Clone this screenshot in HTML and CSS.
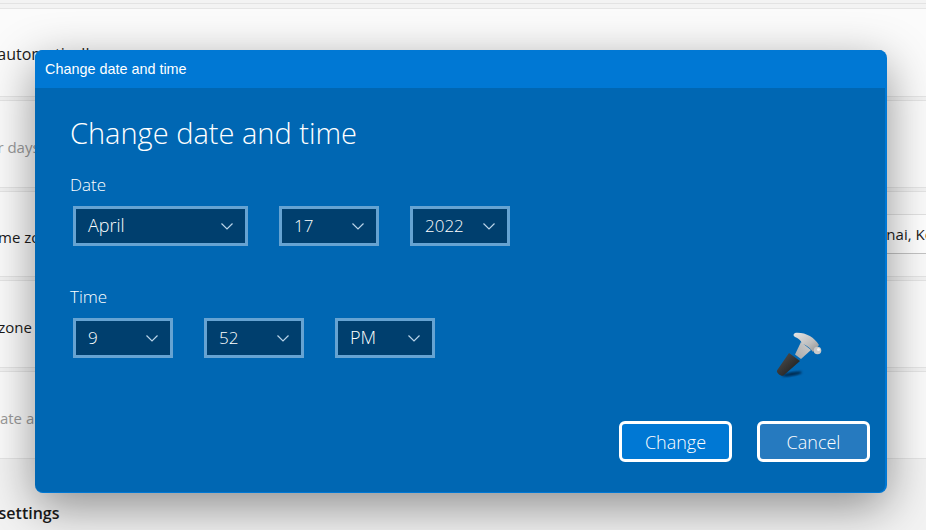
FILE: index.html
```
<!DOCTYPE html>
<html lang="en">
<head>
<meta charset="utf-8">
<title>Change date and time</title>
<link rel="stylesheet" href="styles.css">
</head>
<body>
<main class="settings">
  <div class="sliver"></div>
  <section class="row r1"><span class="label first shift1">Set time automatically</span></section>
  <section class="row r2"><span class="label muted shift2">Show calendar days</span></section>
  <section class="row r3"><span class="label shift3">Time zone</span><span class="tz">(UTC+05:30) Chennai, Kolkata, Mumbai</span></section>
  <section class="row r4"><span class="label shift4">Set time zone</span></section>
  <section class="row r5"><span class="label muted shift5">Date and time</span></section>
  <h2 class="heading">Additional settings</h2>
</main>

<div class="dialog">
  <header class="titlebar">Change date and time</header>
  <div class="body">
    <h1 class="title">Change date and time</h1>
    <div class="label-date">Date</div>
    <div class="selects">
      <div class="select wide"><span>April</span><svg class="chev" viewBox="0 0 12 7"><path d="M.5.5 6 6l5.500-5.500"/></svg></div>
      <div class="select num"><span>17</span><svg class="chev" viewBox="0 0 12 7"><path d="M.5.5 6 6l5.500-5.500"/></svg></div>
      <div class="select num"><span>2022</span><svg class="chev" viewBox="0 0 12 7"><path d="M.5.5 6 6l5.500-5.500"/></svg></div>
    </div>
    <div class="label-time">Time</div>
    <div class="selects">
      <div class="select num"><span>9</span><svg class="chev" viewBox="0 0 12 7"><path d="M.5.5 6 6l5.500-5.500"/></svg></div>
      <div class="select num"><span>52</span><svg class="chev" viewBox="0 0 12 7"><path d="M.5.5 6 6l5.500-5.500"/></svg></div>
      <div class="select"><span>PM</span><svg class="chev" viewBox="0 0 12 7"><path d="M.5.5 6 6l5.500-5.500"/></svg></div>
    </div>
    <div class="actions">
      <button class="btn primary" type="button">Change</button>
      <button class="btn secondary" type="button">Cancel</button>
    </div>
    <svg class="hammer" viewBox="0 0 50 50" width="50" height="50" aria-hidden="true">
      <defs>
        <linearGradient id="steel" x1="0" y1="0" x2="1" y2="1">
          <stop offset="0" stop-color="#e6e6e6"/>
          <stop offset=".6" stop-color="#bdbdbd"/>
          <stop offset="1" stop-color="#8f8f8f"/>
        </linearGradient>
        <linearGradient id="neck" x1="0" y1="1" x2="1" y2="0">
          <stop offset="0" stop-color="#a8a8a8"/>
          <stop offset="1" stop-color="#cfcfcf"/>
        </linearGradient>
        <linearGradient id="grip" x1="0" y1="0" x2="1" y2="1">
          <stop offset="0" stop-color="#555"/>
          <stop offset="1" stop-color="#151515"/>
        </linearGradient>
        <filter id="soft"><feGaussianBlur stdDeviation="1"/></filter>
      </defs>
      <ellipse cx="17" cy="44" rx="10" ry="1.800" fill="#00264a" transform="rotate(-10 17 44)" filter="url(#soft)"/>
      <path d="M14 23 25 31 8.500 45.500C6.500 47 1 43 2 40.500z" fill="url(#grip)"/>
      <path d="M26 12 36 20 26 29 20 24.500z" fill="url(#neck)"/>
      <path d="M20 3C30 2 39 7 44 15L38 22C35 18 32 15 27 14 26 10 23 8 20 7 18 6 18 4 20 3z" fill="url(#steel)"/>
      <circle cx="42.500" cy="20.500" r="3.800" fill="#c9c9c9"/>
      <circle cx="43.500" cy="19.500" r="1.500" fill="#efefef"/>
    </svg>
  </div>
</div>
</body>
</html>
```
FILE: styles.css
```
* { box-sizing: border-box; }

html {
  background: #f3f3f3;
}

html, body {
  margin: 0;
  height: 530px;
  overflow: hidden;
}

body {
  position: relative;
  background: #f3f3f3;
  font-family: "Open Sans", "Noto Sans", sans-serif;
}

.settings {
  display: flex;
  flex-direction: column;
  height: 530px;
  padding-top: 3px;
  overflow: hidden;
}

.sliver {
  height: 1px;
  margin-bottom: 4px;
  background: #e3e3e3;
}

.row {
  display: flex;
  align-items: center;
  justify-content: space-between;
  flex: none;
  background: #fbfbfb;
  border-top: 1px solid #e5e5e5;
  border-bottom: 1px solid #e5e5e5;
  margin-bottom: 3px;
  white-space: nowrap;
  font-size: 15px;
  color: #1a1a1a;
}

.r1 { height: 89px; }
.r2 { height: 88px; }
.r3 { height: 86px; }
.r4 { height: 88px; }
.r5 { height: 88px; }

.label {
  display: block;
  padding-top: 5px;
}

.first {
  padding-top: 2px;
  font-size: 16px;
}

.muted { color: #9a9a9a; }
.shift1 { margin-left: -68px; }
.shift2 { margin-left: -99px; }
.shift3 { margin-left: -14px; }
.shift4 { margin-left: -63px; }
.shift5 { margin-left: -11px; }

.tz {
  display: block;
  flex: none;
  height: 40px;
  line-height: 38px;
  padding: 0 12px;
  margin-right: -120px;
  background: #fff;
  border: 1px solid #e2e2e2;
  border-bottom-color: #c4c4c4;
  border-radius: 4px;
}

.heading {
  margin: 40px 0 0 -85px;
  font-size: 16px;
  font-weight: 600;
  color: #1a1a1a;
  white-space: nowrap;
}

.dialog {
  position: absolute;
  left: 35px;
  top: 50px;
  width: 852px;
  height: 443px;
  display: flex;
  flex-direction: column;
  overflow: hidden;
  background: #0067b3;
  border-radius: 8px;
  border: solid #0078d4;
  border-width: 0 2px 1px 0;
  color: #fff;
  box-shadow: 0 14px 48px rgba(0, 0, 0, .42);
}

.titlebar {
  flex: none;
  height: 38px;
  margin-right: -2px;
  padding-left: 10px;
  background: #0078d4;
  font-family: "Liberation Sans", Arial, sans-serif;
  font-size: 14.400px;
  line-height: 38px;
}

.body {
  position: relative;
  flex: 1;
  padding-left: 35px;
}

.title {
  margin: 24px 0 0;
  height: 42px;
  font-size: 29px;
  font-weight: 300;
  line-height: 42px;
}

.label-date, .label-time {
  font-size: 17px;
  font-weight: 300;
  line-height: 22px;
}

.label-date { margin-top: 20px; }
.label-time { margin-top: 40px; }

.selects {
  display: flex;
  gap: 31px;
  margin: 10px 0 0 3px;
}

.select {
  display: flex;
  align-items: center;
  justify-content: space-between;
  width: 100px;
  height: 40px;
  padding: 0 12px 2px 12px;
  background: #003f6e;
  border: 3px solid #66a3d2;
  font-size: 18px;
  font-weight: 300;
}

.num { font-size: 17px; }
.wide { width: 175px; }

.chev {
  width: 12px;
  height: 7px;
  margin-top: 2px;
  fill: none;
  stroke: #b9d3e8;
  stroke-width: 1.200;
}

.actions {
  position: absolute;
  right: 15px;
  top: 333px;
  display: flex;
  gap: 25px;
}

.btn {
  width: 113px;
  height: 41px;
  padding: 0;
  border: 3px solid #fff;
  border-radius: 6px;
  color: #fff;
  font-family: inherit;
  font-size: 18px;
  font-weight: 300;
}

.primary { background: #0078d4; }
.secondary { background: #267abf; }

.hammer {
  position: absolute;
  left: 740px;
  top: 242px;
}
```
